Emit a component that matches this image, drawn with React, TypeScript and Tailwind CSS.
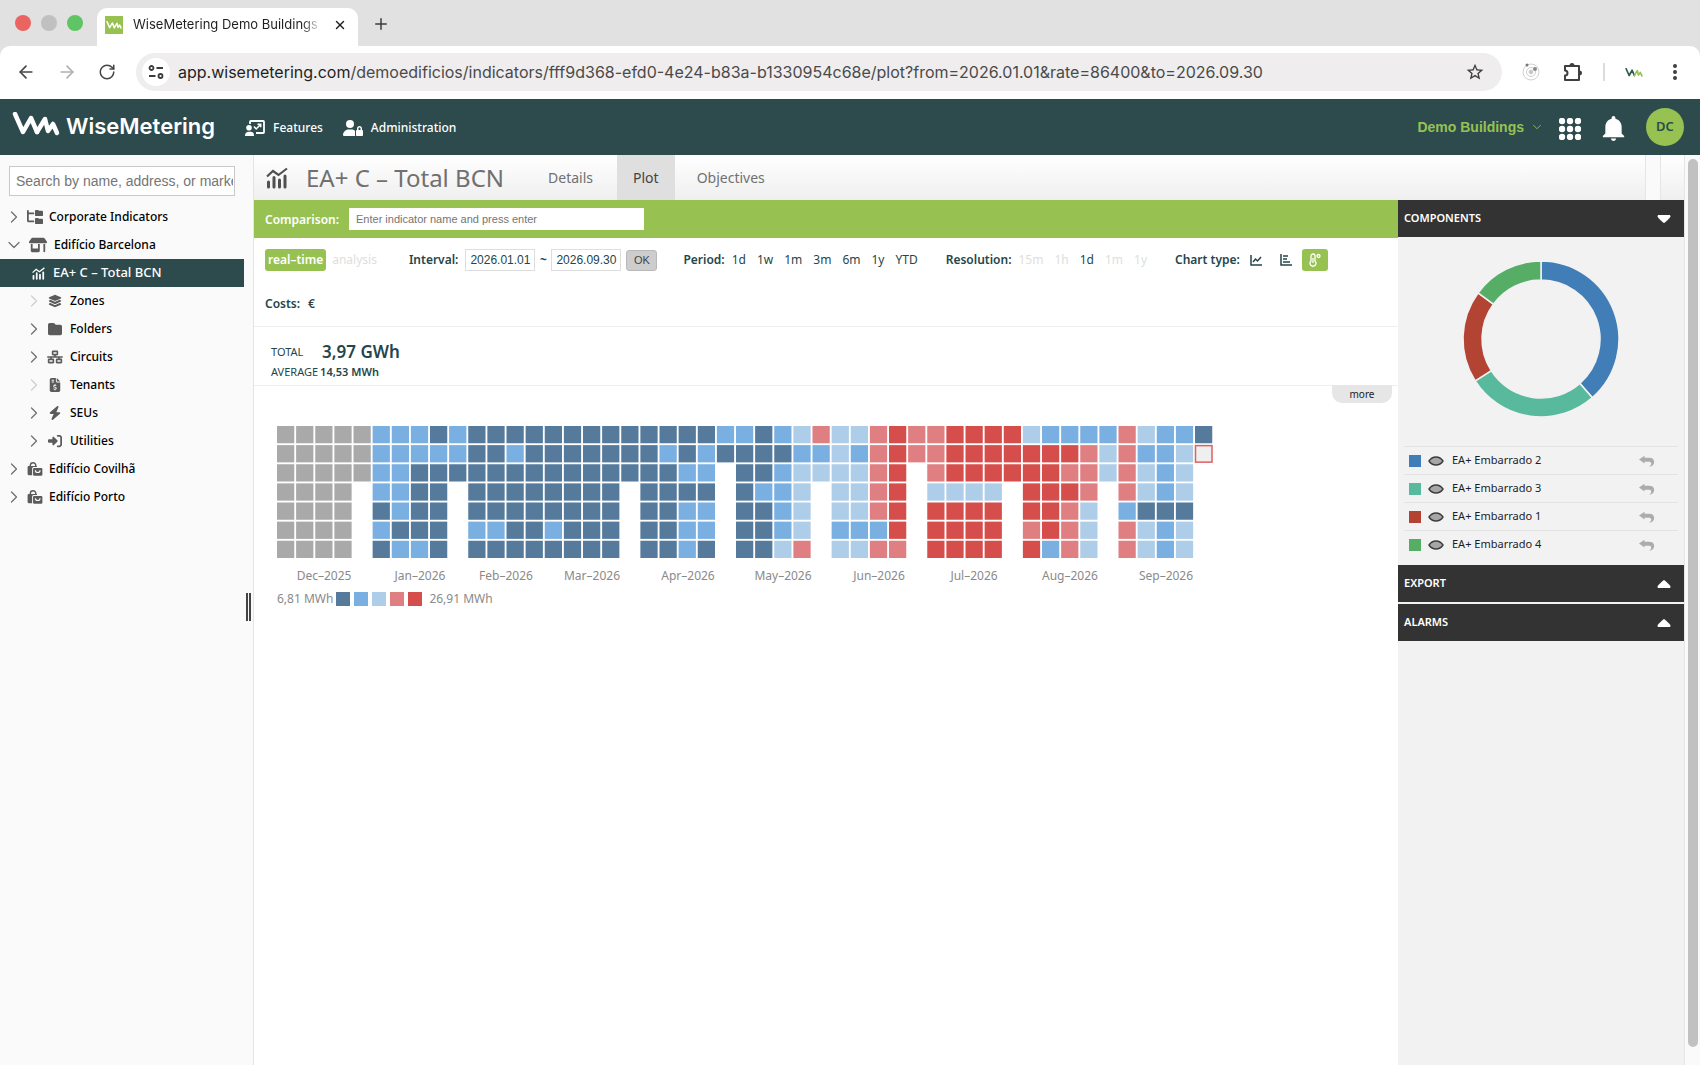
import { useState } from 'react'
import type { ReactNode } from 'react'
import { ArrowLeft, ArrowRight, ChevronDown, ChevronRight, Plus, RotateCw, X } from 'lucide-react'
import {
  FaBolt,
  FaFileInvoiceDollar,
  FaFolder,
  FaFolderTree,
  FaLayerGroup,
  FaNetworkWired,
  FaRightToBracket,
  FaShop,
  FaUserLock,
} from 'react-icons/fa6'
import { IoMdNotifications } from 'react-icons/io'
import { MdStarBorder } from 'react-icons/md'

// One string per week column, one letter per day
const weeks = [
  'ggggggg', 'ggggggg', 'ggggggg', 'ggggggg', 'ggg',
  'bbbbdbd', 'bbbbbdb', 'bbddddb', 'dbddddd', 'bbd',
  'dddddbd', 'dddddbd', 'dbddddd', 'ddddddd', 'dddddbd',
  'ddddddd', 'ddddddd', 'ddddddd', 'ddd',
  'ddddddd', 'dbddddd', 'ddbdbbb', 'dbbdbbd', 'bd',
  'bdddddd', 'dddbddd', 'bdbbbbl', 'lbllllp', 'pbl',
  'lllllbl', 'lblllbl', 'pppppbp', 'rrrrrrp', 'pp',
  'ppplrrr', 'rrrlrrr', 'rrrlrrr', 'rrrlrrr', 'rrr',
  'lrrrrpr', 'brrrrrb', 'brprppp', 'bppplll', 'bll',
  'ppppbpp', 'lblldll', 'bbbbdbb', 'bllldll', 'do',
]

const colors: Record<string, string> = {
  g: '#a9a9a9',
  d: '#557a9b',
  b: '#7aafe1',
  l: '#aecde9',
  p: '#e07f82',
  r: '#d64e4b',
}

const months = [
  { label: 'Dec–2025', x: 47 },
  { label: 'Jan–2026', x: 143 },
  { label: 'Feb–2026', x: 229 },
  { label: 'Mar–2026', x: 315 },
  { label: 'Apr–2026', x: 411 },
  { label: 'May–2026', x: 506 },
  { label: 'Jun–2026', x: 602 },
  { label: 'Jul–2026', x: 697 },
  { label: 'Aug–2026', x: 793 },
  { label: 'Sep–2026', x: 889 },
]

const components = [
  { name: 'EA+ Embarrado 2', color: '#417eb7', from: 0, to: 138.8 },
  { name: 'EA+ Embarrado 3', color: '#59b99c', from: 138.8, to: 237.5 },
  { name: 'EA+ Embarrado 1', color: '#b34434', from: 237.5, to: 306.2 },
  { name: 'EA+ Embarrado 4', color: '#56ad66', from: 306.2, to: 360 },
]

function LogoMark({ className, from = 'currentColor', to = 'currentColor' }: { className: string; from?: string; to?: string }) {
  return (
    <svg viewBox="0 0 48 24" className={className} fill="none" strokeWidth="4.500" strokeLinecap="round" strokeLinejoin="round">
      <path d="M3 2 L11 20 L19 6 L25 20" stroke={from} />
      <path d="M25 20 L33 7 L36 19 L41 12 L45 21" stroke={to} />
    </svg>
  )
}

function ComboChartIcon({ className }: { className: string }) {
  return (
    <svg viewBox="0 0 22 22" className={className} fill="none" stroke="currentColor">
      <path d="M1 9.500 L7 4 L12.500 8 L21 1.500" strokeWidth="2.200" />
      <path d="M2.500 20V15 M8 20V10.500 M13.500 20V13 M19 20V9" strokeWidth="3" strokeLinecap="round" />
    </svg>
  )
}

function BagsIcon({ className }: { className: string }) {
  return (
    <svg viewBox="0 0 20 18" className={className} fill="currentColor">
      <path d="M4 6V4.500a3.500 3.500 0 0 1 7 0V6" fill="none" stroke="currentColor" strokeWidth="1.800" />
      <path d="M2 5h10.500v1.500H8A2 2 0 0 0 6.300 8.500V17H2a1.500 1.500 0 0 1-1.500-1.500v-9A1.500 1.500 0 0 1 2 5z" />
      <path d="M9 7.600h9a1.500 1.500 0 0 1 1.500 1.500v7A1.500 1.500 0 0 1 18 17.600H9a1.500 1.500 0 0 1-1.500-1.500v-7A1.500 1.500 0 0 1 9 7.600z" />
      <path d="M10.500 10.500c0 4 6 4 6 0" fill="none" stroke="#fafafa" strokeWidth="1.500" />
    </svg>
  )
}

function PresentIcon({ className }: { className: string }) {
  return (
    <svg viewBox="0 0 20 16" className={className} fill="currentColor">
      <path d="M5 4V1.800A.8.800 0 0 1 5.800 1h12.400a.8.800 0 0 1 .8.800v10.400a.8.800 0 0 1-.8.800H11" fill="none" stroke="currentColor" strokeWidth="1.800" />
      <circle cx="4" cy="7.800" r="2.800" />
      <path d="M0 16c0-3 1.500-4.300 4-4.300h1.500C8 11.700 9 13 9 16z" />
      <path d="M9 6.500l2.200 2.500 4-4.300M12.500 4.200h3.200v3" fill="none" stroke="currentColor" strokeWidth="1.500" />
    </svg>
  )
}

function EyeIcon() {
  return (
    <svg viewBox="0 0 16 12" className="h-3 w-4">
      <path d="M1 6C4.500 .6 11.500 .6 15 6C11.500 11.400 4.500 11.400 1 6z" fill="#a6a6a6" stroke="#3c3c3c" strokeWidth="1.400" />
    </svg>
  )
}

function UndoIcon() {
  return (
    <svg viewBox="0 0 16 12" className="h-3 w-4" fill="#acacac">
      <path d="M0 4.500 5.500 .8v2H10c3.300 0 5.200 1.600 5.200 4.100s-1.800 4.300-5.200 4.800c1.600-1 2.200-1.800 2.200-2.900 0-1.400-1-2-2.700-2h-4v1.700z" />
    </svg>
  )
}

type NodeProps = { label: string; icon: ReactNode; open?: boolean; child?: boolean; empty?: boolean }

function TreeNode({ label, icon, open, child, empty }: NodeProps) {
  const Chevron = open ? ChevronDown : ChevronRight
  return (
    <li className={child ? 'pl-[26px]' : 'pl-[6px]'}>
      <button type="button" className={`flex h-7 items-center text-[12px] font-medium text-black ${open ? 'gap-[7px]' : 'gap-1'}`}>
        <Chevron className={`h-4 w-4 scale-125 ${empty ? 'text-[#cfcfcf]' : 'text-[#707070]'}`} strokeWidth={1.5} />
        <span className="flex w-[18px] justify-center text-[#5b5b5b]">{icon}</span>
        <span className={open ? '' : child ? 'pl-[2px]' : 'pl-px'}>{label}</span>
      </button>
    </li>
  )
}

function BrowserBar() {
  return (
    <div className="shrink-0 bg-[#e1e1e1] font-[Inter,sans-serif]">
      <div className="flex h-[46px] items-end">
        <div className="flex h-[46px] w-[97px] items-center gap-[10px] pl-[15px]">
          <span className="h-4 w-4 rounded-full bg-[#ea6461]" />
          <span className="h-4 w-4 rounded-full bg-[#c0c0c0]" />
          <span className="h-4 w-4 rounded-full bg-[#5fc463]" />
        </div>
        <div className="flex h-[38px] w-[261px] items-center rounded-t-[10px] bg-white px-2 pb-1">
          <span className="flex h-[18px] w-[18px] shrink-0 items-center justify-center bg-[#97c252] text-white">
            <LogoMark className="h-2 w-4" />
          </span>
          <span className="ml-[10px] w-[188px] overflow-hidden whitespace-nowrap bg-linear-to-r from-[#1f1f1f] from-90% to-transparent bg-clip-text text-[13px] text-transparent">
            WiseMetering Demo Buildings
          </span>
          <button type="button" aria-label="Close tab" className="ml-3 text-[#1f1f1f]">
            <X className="h-[14px] w-[14px]" strokeWidth={2.5} />
          </button>
        </div>
        <button type="button" aria-label="New tab" className="mb-[13px] ml-[14px] text-[#3c3c3c]">
          <Plus className="h-[18px] w-[18px]" strokeWidth={2} />
        </button>
      </div>
      <div className="flex h-[53px] items-center rounded-t-[10px] bg-white pb-px">
        <div className="flex w-[136px] items-center gap-[21px] pl-4 text-[#454545]">
          <button type="button" aria-label="Back"><ArrowLeft className="h-5 w-5" strokeWidth={2} /></button>
          <button type="button" aria-label="Forward" className="text-[#b0b0b0]"><ArrowRight className="h-5 w-5" strokeWidth={2} /></button>
          <button type="button" aria-label="Reload"><RotateCw className="h-[18px] w-[18px]" strokeWidth={2} /></button>
        </div>
        <div className="flex h-[38px] flex-1 items-center rounded-full bg-[#efedee] pl-[6px] pr-[17px]">
          <span className="flex h-7 w-7 shrink-0 items-center justify-center rounded-full bg-white">
            <svg viewBox="0 0 16 16" className="h-4 w-4" fill="none" stroke="#3c3c3c" strokeWidth="1.800">
              <circle cx="3.500" cy="4" r="2" />
              <path d="M8.500 4H15M1 12h6.500" />
              <circle cx="12.500" cy="12" r="2" />
            </svg>
          </span>
          <p className="flex-1 whitespace-nowrap pl-2 text-[16px] text-[#4a4a4a]">
            <span className="text-[#1f1f1f]">app.wisemetering.com</span>
            /demoedificios/indicators/fff9d368-efd0-4e24-b83a-b1330954c68e/plot?from=2026.01.01&amp;rate=86400&amp;to=2026.09.30
          </p>
          <button type="button" aria-label="Bookmark" className="text-[#3f3f3f]"><MdStarBorder className="h-5 w-5" /></button>
        </div>
        <div className="flex items-center pl-5 pr-[23px]">
          <svg viewBox="0 0 18 18" className="h-[18px] w-[18px]" fill="none" stroke="#d0d0d0">
            <circle cx="9" cy="9" r="8" />
            <circle cx="9" cy="9" r="4.500" />
            <circle cx="9" cy="9" r="2" fill="#c4c4c4" />
            <circle cx="5" cy="2" r="1.500" fill="#777" stroke="none" />
            <circle cx="13" cy="6" r="2" fill="#888" stroke="none" />
          </svg>
          <svg viewBox="0 0 20 20" className="ml-[23px] h-5 w-5" fill="none" stroke="#3f3f3f" strokeWidth="2" strokeLinejoin="round">
            <path d="M2 4h14v14H2v-4.500a2.500 2.500 0 0 0 0-5z" />
            <path d="M7.500 3.500a1.500 1.500 0 0 1 3 0M16.500 9.500a1.500 1.500 0 0 1 0 3" />
          </svg>
          <span className="ml-5 h-[18px] w-[2px] bg-[#dcdcdc]" />
          <LogoMark className="ml-5 h-[9px] w-[18px]" from="#2d5a4b" to="#97c252" />
          <svg viewBox="0 0 4 16" className="ml-[30px] h-4 w-1" fill="#3f3f3f">
            <circle cx="2" cy="2" r="2" />
            <circle cx="2" cy="8" r="2" />
            <circle cx="2" cy="14" r="2" />
          </svg>
        </div>
      </div>
    </div>
  )
}

function AppHeader() {
  return (
    <header className="flex h-14 shrink-0 items-center bg-[#2d4b4d] pl-3 pr-4 text-white">
      <LogoMark className="mb-[6px] h-6 w-12" />
      <span className="ml-[6px] pb-[2px] font-[Inter,sans-serif] text-[22px] font-semibold">WiseMetering</span>
      <nav className="ml-[30px] flex items-center pt-px text-[12px] font-medium">
        <a href="#features" className="flex items-center gap-2">
          <PresentIcon className="h-4 w-5" />
          Features
        </a>
        <a href="#administration" className="ml-5 flex items-center gap-2">
          <FaUserLock className="h-[18px] w-5" />
          Administration
        </a>
      </nav>
      <button type="button" className="ml-auto flex items-center gap-[6px] font-['Liberation_Sans',sans-serif] text-[14px] font-bold text-[#97c252]">
        Demo Buildings
        <ChevronDown className="h-[14px] w-[14px]" strokeWidth={1.5} />
      </button>
      <button type="button" aria-label="Applications" className="ml-[15px]">
        <svg viewBox="0 0 22 22" className="mt-[3px] h-[22px] w-[22px]" fill="currentColor">
          {[3, 11, 19].map(y => [3, 11, 19].map(x => <circle key={`${x}-${y}`} cx={x} cy={y} r="3.200" />))}
        </svg>
      </button>
      <button type="button" aria-label="Notifications" className="ml-[17px]">
        <IoMdNotifications className="mt-[3px] h-[31px] w-[31px]" />
      </button>
      <button type="button" className="ml-[17px] h-[38px] w-[38px] rounded-full bg-[#97c252] text-[13px] font-semibold text-[#2d4b4d]">DC</button>
    </header>
  )
}

function Sidebar() {
  return (
    <aside className="relative w-[254px] shrink-0 border-r border-[#e4e4e4] bg-[#fafafa] pt-[11px]">
      <input
        type="text"
        aria-label="Search"
        placeholder="Search by name, address, or market"
        className="ml-[9px] block h-[30px] w-[226px] border border-[#c9c9c9] bg-white pl-[6px] pr-px font-['Liberation_Sans',sans-serif] text-[14px] placeholder:text-[#757575]"
      />
      <ul className="pt-[7px]">
        <TreeNode label="Corporate Indicators" icon={<FaFolderTree className="h-4 w-4" />} />
        <TreeNode label="Edifício Barcelona" open icon={<FaShop className="h-4 w-[18px]" />} />
        <li>
          <a href="#plot" className="mr-[9px] flex h-7 items-center gap-2 bg-[#2d4b4d] pl-8 text-[13px] font-medium text-white">
            <ComboChartIcon className="h-[13px] w-[13px]" />
            EA+ C – Total BCN
          </a>
        </li>
        <TreeNode child empty label="Zones" icon={<FaLayerGroup className="h-[14px] w-[14px]" />} />
        <TreeNode child label="Folders" icon={<FaFolder className="h-[14px] w-[14px]" />} />
        <TreeNode child label="Circuits" icon={<FaNetworkWired className="h-4 w-4" />} />
        <TreeNode child empty label="Tenants" icon={<FaFileInvoiceDollar className="h-[14px] w-[14px]" />} />
        <TreeNode child label="SEUs" icon={<FaBolt className="h-[14px] w-[14px]" />} />
        <TreeNode child label="Utilities" icon={<FaRightToBracket className="h-[14px] w-[14px]" />} />
        <TreeNode label="Edifício Covilhã" icon={<BagsIcon className="h-[14px] w-4" />} />
        <TreeNode label="Edifício Porto" icon={<BagsIcon className="h-[14px] w-4" />} />
      </ul>
      {/* resize handle */}
      <span className="absolute right-[2px] top-[438px] h-7 w-[5px] border-x-2 border-[#444]" />
    </aside>
  )
}

function Options({ label, items, disabled = [] }: { label: string; items: string[]; disabled?: string[] }) {
  return (
    <div className="flex items-center gap-[11px]">
      <span className="-mr-1 font-semibold">{label}</span>
      {items.map(item => (
        <button key={item} type="button" disabled={disabled.includes(item)} className="disabled:text-[#dedede]">
          {item}
        </button>
      ))}
    </div>
  )
}

function Filters() {
  const [from, setFrom] = useState('2026.01.01')
  const [to, setTo] = useState('2026.09.30')
  const dateClass = "h-[22px] w-[70px] border border-[#dedede] bg-white text-center font-['Liberation_Sans',sans-serif] text-[12px]"

  return (
    <div className="border-b border-[#efefef] px-[11px] pt-[11px] text-[12px]">
      <div className="flex h-[22px] items-center">
        <button type="button" className="h-[22px] rounded-[3px] bg-[#97c252] px-[3px] font-semibold text-white">real–time</button>
        <button type="button" disabled className="ml-[6px] text-[#dedede]">analysis</button>
        <div className="ml-8 flex items-center">
          <label htmlFor="from" className="mr-[7px] font-semibold">Interval:</label>
          <input id="from" className={dateClass} value={from} onChange={e => setFrom(e.target.value)} />
          <span className="w-4 text-center font-bold">~</span>
          <input aria-label="Interval end" className={dateClass} value={to} onChange={e => setTo(e.target.value)} />
          <button type="button" className="ml-[5px] h-[21px] w-[31px] rounded-[3px] border border-[#b9b9b9] bg-[#cdcdcd] font-['Liberation_Sans',sans-serif] text-[11px] text-[#444]">
            OK
          </button>
        </div>
        <div className="ml-[26px]">
          <Options label="Period:" items={['1d', '1w', '1m', '3m', '6m', '1y', 'YTD']} />
        </div>
        <div className="ml-7">
          <Options label="Resolution:" items={['15m', '1h', '1d', '1m', '1y']} disabled={['15m', '1h', '1m', '1y']} />
        </div>
        <div className="ml-7 flex items-center">
          <span className="font-semibold">Chart type:</span>
          <button type="button" aria-label="Line chart" className="ml-[10px]">
            <svg viewBox="0 0 12 12" className="h-3 w-3" fill="none" stroke="currentColor" strokeWidth="1.500">
              <path d="M1 1v10h11M3 8l2.500-3 2 2L11 3" />
            </svg>
          </button>
          <button type="button" aria-label="Bar chart" className="ml-[18px]">
            <svg viewBox="0 0 12 12" className="h-3 w-3" fill="none" stroke="currentColor" strokeWidth="1.500">
              <path d="M1 0v11h11M3 2h5M3 5h4M3 8h7" />
            </svg>
          </button>
          <button type="button" aria-label="Heat map" className="ml-[10px] flex h-[22px] w-[26px] items-center justify-center rounded-[3px] bg-[#97c252] text-white">
            <svg viewBox="0 0 12 14" className="h-[14px] w-3" fill="none" stroke="currentColor" strokeWidth="1.300">
              <path d="M2 8V3a2 2 0 0 1 4 0v5a3 3 0 1 1-4 0z" />
              <path d="M4 5v5" />
              <circle cx="9.500" cy="3" r="1.500" />
            </svg>
          </button>
        </div>
      </div>
      <div className="flex h-[55px] items-center gap-2 pb-[6px] pt-4 font-semibold">
        <span>Costs:</span>
        <button type="button">€</button>
      </div>
    </div>
  )
}

function Heatmap() {
  const pitch = 19.125
  return (
    <div className="px-[23px] pt-10 text-[#8a8a8a]">
      <svg width="940" height="160" viewBox="0 0 940 160" role="img" aria-label="Daily consumption">
        {weeks.map((week, x) =>
          week.split('').map((day, y) => (
            <rect
              key={`${x}-${y}`}
              x={x * pitch + (day === 'o' ? 0.5 : 0)}
              y={y * pitch + (day === 'o' ? 0.5 : 0)}
              width={day === 'o' ? 16.5 : 17.25}
              height={day === 'o' ? 16.5 : 17.25}
              fill={colors[day] || '#efefef'}
              stroke={day === 'o' ? '#e0605e' : 'none'}
              strokeWidth="1.500"
            />
          ))
        )}
        {months.map(m => (
          <text key={m.label} x={m.x} y="154" textAnchor="middle" fontSize="12" fill="#8a8a8a">{m.label}</text>
        ))}
      </svg>
      <div className="flex h-[26px] items-center gap-1 text-[12px]">
        <span className="-mr-px">6,81 MWh</span>
        <span className="h-[14px] w-[14px] bg-[#557a9b]" />
        <span className="h-[14px] w-[14px] bg-[#7aafe1]" />
        <span className="h-[14px] w-[14px] bg-[#aecde9]" />
        <span className="h-[14px] w-[14px] bg-[#e07f82]" />
        <span className="h-[14px] w-[14px] bg-[#d64e4b]" />
        <span className="pl-[3px]">26,91 MWh</span>
      </div>
    </div>
  )
}

function arc(from: number, to: number) {
  const point = (deg: number, r: number) => {
    const a = (deg * Math.PI) / 180
    return `${80 + r * Math.sin(a)} ${80 - r * Math.cos(a)}`
  }
  const large = to - from > 180 ? 1 : 0
  return `M${point(from, 78)} A78 78 0 ${large} 1 ${point(to, 78)} L${point(to, 59)} A59 59 0 ${large} 0 ${point(from, 59)} Z`
}

function PanelHeader({ title, open }: { title: string; open?: boolean }) {
  return (
    <button type="button" aria-expanded={!!open} className="flex h-[37px] w-full items-center justify-between bg-[#333] pl-[6px] pr-[13px] text-[11px] font-semibold text-white">
      {title}
      <svg viewBox="0 0 14 8" className={`h-2 w-[14px] ${open ? 'rotate-180' : ''}`} fill="currentColor">
        <path d="M7 0c.5 0 6.500 5.500 6.500 6.500S13 8 12.500 8h-11C1 8 .5 7.500 .5 6.500S6.500 0 7 0z" />
      </svg>
    </button>
  )
}

function RightPanel() {
  return (
    <aside className="w-[286px] shrink-0 bg-[#f2f2f2] text-[11px] text-[#1c1c2c]">
      <PanelHeader title="COMPONENTS" open />
      <div className="flex justify-center pb-[27px] pt-[22px]">
        <svg viewBox="0 0 160 160" className="h-40 w-40" role="img" aria-label="Components share">
          {components.map(c => (
            <path key={c.name} d={arc(c.from, c.to)} fill={c.color} stroke="#f2f2f2" strokeWidth="1.500" />
          ))}
        </svg>
      </div>
      <ul className="mx-[6px] pb-[7px]">
        {components.map(c => (
          <li key={c.name} className="flex h-7 items-center border-t border-[#e3e3e3] pl-[5px] pr-[23px]">
            <span className="h-3 w-3" style={{ background: c.color }} />
            <button type="button" aria-label={`Toggle ${c.name}`} className="ml-[7px] mr-2"><EyeIcon /></button>
            <span className="flex-1">{c.name}</span>
            <button type="button" aria-label={`Reset ${c.name}`}><UndoIcon /></button>
          </li>
        ))}
      </ul>
      <div className="flex flex-col gap-[2px]">
        <PanelHeader title="EXPORT" />
        <PanelHeader title="ALARMS" />
      </div>
    </aside>
  )
}

export default function App() {
  return (
    <div className="flex h-screen flex-col overflow-hidden bg-white font-['Noto_Sans',sans-serif]">
      <BrowserBar />
      <AppHeader />
      <div className="flex min-h-0 flex-1">
        <Sidebar />
        <main className="flex min-w-0 flex-1 flex-col">
          <div className="flex h-[45px] shrink-0 items-center bg-linear-to-b from-white to-[#efefef] pl-3 text-[#707070]">
            <ComboChartIcon className="h-[22px] w-[22px] text-[#505050]" />
            <h1 className="ml-[18px] text-[24px]">EA+ C – Total BCN</h1>
            <nav className="ml-5 flex h-full text-[14px]">
              <a href="#details" className="flex items-center px-6">Details</a>
              <a href="#plot" className="flex items-center bg-[#dfdfdf] px-4 text-[#444]">Plot</a>
              <a href="#objectives" className="flex items-center px-[22px]">Objectives</a>
            </nav>
            <span className="ml-auto mr-[23px] h-full w-4 border-x border-[#e6e6e6] bg-[#fafafa]" />
          </div>
          <div className="flex flex-1">
            <section className="min-w-0 flex-1 text-[#24464a]">
              <div className="flex h-[38px] items-center bg-[#97c252] pl-[11px]">
                <label htmlFor="comparison" className="mr-[10px] pt-[2px] text-[12px] font-semibold text-white">Comparison:</label>
                <input
                  id="comparison"
                  type="text"
                  placeholder="Enter indicator name and press enter"
                  className="h-[22px] w-[295px] bg-white px-[7px] font-['Liberation_Sans',sans-serif] text-[11px] placeholder:text-[#757575]"
                />
              </div>
              <Filters />
              <div className="relative border-b border-[#efefef] px-[17px] pb-1 pt-[14px]">
                <table className="text-left text-[11px]">
                  <tbody>
                    <tr className="h-[22px]">
                      <th className="pr-[2px] font-normal">TOTAL</th>
                      <td className="pl-[2px] text-[17px] leading-[22px] font-semibold">3,97 GWh</td>
                    </tr>
                    <tr className="h-[18px]">
                      <th className="pr-[2px] font-normal">AVERAGE</th>
                      <td className="font-semibold">14,53 MWh</td>
                    </tr>
                  </tbody>
                </table>
                <button type="button" className="absolute right-[6px] top-full h-[18px] w-[60px] rounded-b-[10px] bg-[#e6e6e6] text-[10px] text-[#222]">
                  more
                </button>
              </div>
              <Heatmap />
            </section>
            <RightPanel />
          </div>
        </main>
        <div className="w-4 shrink-0 border-l border-[#e6e6e6] bg-[#fafafa] pb-[18px] pl-[3px] pt-1">
          <div className="h-full w-[10px] rounded-full bg-[#c1c1c1]" />
        </div>
      </div>
    </div>
  )
}
